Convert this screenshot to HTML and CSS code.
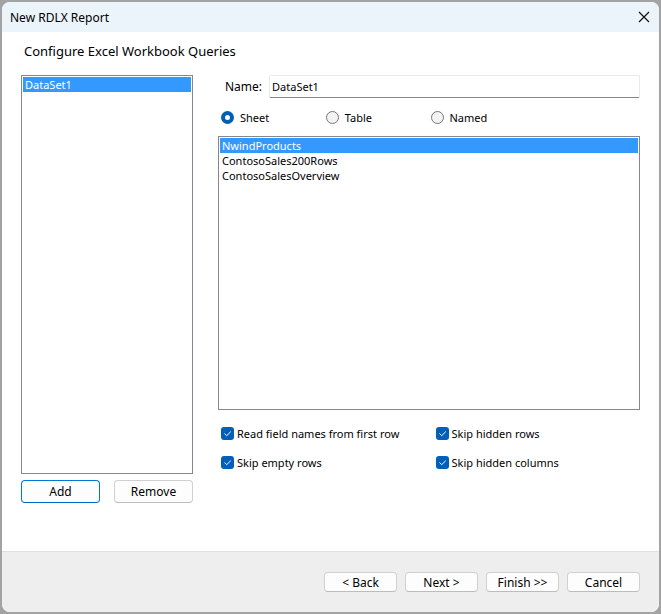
FILE: index.html
```html
<!DOCTYPE html>
<html lang="en">
<head>
<meta charset="utf-8">
<title>New RDLX Report</title>
<link rel="stylesheet" href="styles.css">
</head>
<body>
<main class="dialog">
  <header class="titlebar">
    <span class="title">New RDLX Report</span>
    <button class="close" type="button" aria-label="Close">
      <svg width="12" height="12" viewBox="0 0 12 12"><path d="M1 1 11 11M11 1 1 11" fill="none" stroke="#111" stroke-width="1.2"/></svg>
    </button>
  </header>
  <section class="content">
    <h1 class="heading">Configure Excel Workbook Queries</h1>
    <div class="columns">
      <div class="datasets">
        <select class="list" size="8" aria-label="Data sets">
          <option selected>DataSet1</option>
        </select>
        <div class="actions">
          <button class="btn primary" type="button">Add</button>
          <button class="btn" type="button">Remove</button>
        </div>
      </div>
      <div class="settings">
        <div class="name-row">
          <label for="name">Name:</label>
          <input class="field" id="name" type="text" value="DataSet1">
        </div>
        <div class="sources">
          <label class="choice"><input type="radio" name="source" checked>Sheet</label>
          <label class="choice"><input type="radio" name="source">Table</label>
          <label class="choice"><input type="radio" name="source">Named</label>
        </div>
        <select class="list" size="8" aria-label="Sheets">
          <option selected>NwindProducts</option>
          <option>ContosoSales200Rows</option>
          <option>ContosoSalesOverview</option>
        </select>
        <div class="options">
          <label class="check"><input type="checkbox" checked>Read field names from first row</label>
          <label class="check"><input type="checkbox" checked>Skip hidden rows</label>
          <label class="check"><input type="checkbox" checked>Skip empty rows</label>
          <label class="check"><input type="checkbox" checked>Skip hidden columns</label>
        </div>
      </div>
    </div>
  </section>
  <footer class="footer">
    <button class="btn" type="button">&lt; Back</button>
    <button class="btn" type="button">Next &gt;</button>
    <button class="btn" type="button">Finish &gt;&gt;</button>
    <button class="btn" type="button">Cancel</button>
  </footer>
</main>
</body>
</html>
```
FILE: styles.css
```css
* {
  box-sizing: border-box;
}

body {
  display: flex;
  min-height: 100vh;
  margin: 0;
  padding: 2px;
  background: #a3a3a3;
  color: #000;
  font: 12px/15px "Noto Sans", "Open Sans", sans-serif;
}

button,
input,
select {
  margin: 0;
  color: inherit;
  font: inherit;
}

.dialog {
  display: flex;
  flex: 1;
  flex-direction: column;
  overflow: hidden;
  border-radius: 8px;
  background: #fff;
}

.titlebar {
  display: flex;
  align-items: center;
  justify-content: space-between;
  height: 30px;
  padding: 0 9px 0 8px;
  background: #ebf4fb;
}

.close {
  display: flex;
  padding: 0;
  border: 0;
  background: none;
}

.content {
  display: flex;
  flex: 1;
  flex-direction: column;
  padding: 10px 19px 48px;
}

.heading {
  margin: 0 0 15px;
  padding-left: 3px;
  font-size: 13px;
  font-weight: 400;
  line-height: 18px;
}

.columns {
  display: flex;
  flex: 1;
  gap: 25px;
}

.datasets {
  display: flex;
  flex: 0 0 172px;
  flex-direction: column;
  gap: 6px;
}

.settings {
  display: flex;
  flex: 1;
  flex-direction: column;
}

.list,
.field,
.choice,
.check {
  font-size: 11px;
}

.list {
  flex: 1;
  width: 100%;
  padding: 1px;
  overflow: hidden;
  border: 1px solid #828790;
  border-radius: 0;
  outline: 0;
  background: #fff;
}

.list option {
  min-height: 15px;
  padding: 0 2px;
  line-height: 15px;
}

.list option:checked {
  background: #39f linear-gradient(#39f, #39f);
  color: #fff;
}

.actions {
  display: grid;
  grid-template-columns: 1fr 1fr;
  gap: 14px;
}

.btn {
  height: 23px;
  padding: 0;
  border: 1px solid #d0d0d0;
  border-bottom-color: #bcbcbc;
  border-radius: 4px;
  background: #fdfdfd;
}

.primary {
  border-color: #0078d4;
  border-bottom-color: #0067c0;
}

.name-row {
  display: flex;
  align-items: center;
  gap: 7px;
  padding-left: 7px;
}

.field {
  flex: 1;
  height: 23px;
  padding: 0 2px;
  border: 1px solid #e9e9e9;
  border-bottom-color: #868686;
  border-radius: 2px;
  outline: 0;
  background: #fff;
}

.sources {
  display: grid;
  grid-template-columns: repeat(4, 1fr);
  padding: 12px 0 11px 3px;
}

.choice,
.check {
  display: flex;
  align-items: center;
}

.choice {
  gap: 6px;
}

.check {
  gap: 3px;
}

.choice input,
.check input {
  flex: none;
  width: 13px;
  height: 13px;
  appearance: none;
}

.choice input {
  border: 1px solid #757575;
  border-radius: 50%;
  background: #f3f3f3;
}

.choice input:checked {
  border: 4px solid #005fb8;
  background: #fff;
}

.check input {
  border-radius: 3px;
  background: #005fb8 url("data:image/svg+xml,%3Csvg xmlns='http://www.w3.org/2000/svg' viewBox='0 0 13 13'%3E%3Cpath d='M3.5 6.5 5.7 8.7 9.8 4.6' fill='none' stroke='white'/%3E%3C/svg%3E");
}

.options {
  display: grid;
  grid-template-columns: 1fr 1fr;
  gap: 14px 10px;
  padding: 16px 0 33px 3px;
}

.footer {
  display: flex;
  align-items: center;
  justify-content: flex-end;
  gap: 8px;
  height: 61px;
  padding: 0 19px;
  border-top: 1px solid #dfdfdf;
  background: #eee;
}

.footer .btn {
  width: 73px;
  height: 20px;
}
```
